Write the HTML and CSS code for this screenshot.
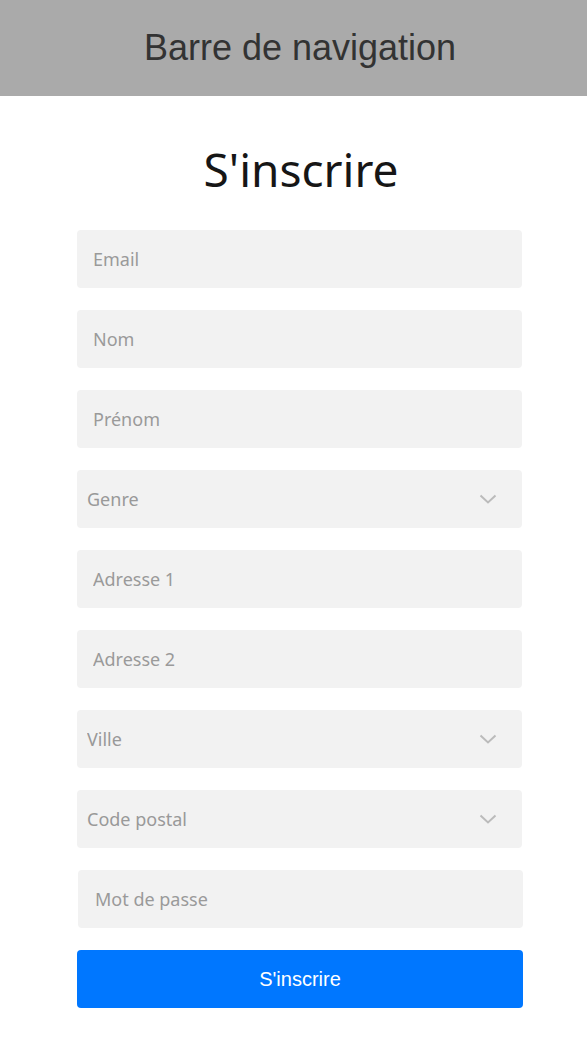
FILE: index.html
```html
<!DOCTYPE html>
<html lang="fr">
<head>
<meta charset="utf-8">
<title>S'inscrire</title>
<link rel="stylesheet" href="styles.css">
</head>
<body>
<header class="navbar">Barre de navigation</header>
<main class="wrap">
  <h1 class="title">S'inscrire</h1>
  <form class="form">
    <input class="field" type="email" placeholder="Email">
    <input class="field" type="text" placeholder="Nom">
    <input class="field" type="text" placeholder="Prénom">
    <div class="select-box">
      <select class="field select"><option>Genre</option></select>
      <svg class="chev" width="18" height="10" viewBox="0 0 18 10"><path d="M1.5 1.5 L9 8.5 L16.5 1.5" fill="none" stroke="#bbb" stroke-width="2"/></svg>
    </div>
    <input class="field" type="text" placeholder="Adresse 1">
    <input class="field" type="text" placeholder="Adresse 2">
    <div class="select-box">
      <select class="field select"><option>Ville</option></select>
      <svg class="chev" width="18" height="10" viewBox="0 0 18 10"><path d="M1.5 1.5 L9 8.5 L16.5 1.5" fill="none" stroke="#bbb" stroke-width="2"/></svg>
    </div>
    <div class="select-box">
      <select class="field select"><option>Code postal</option></select>
      <svg class="chev" width="18" height="10" viewBox="0 0 18 10"><path d="M1.5 1.5 L9 8.5 L16.5 1.5" fill="none" stroke="#bbb" stroke-width="2"/></svg>
    </div>
    <input class="field pass" type="password" placeholder="Mot de passe">
    <button class="submit" type="button">S'inscrire</button>
  </form>
</main>
</body>
</html>
```
FILE: styles.css
```css
html, body { margin: 0; padding: 0; background: #fff; }
body { font-family: "Noto Sans", "Open Sans", sans-serif; }
.navbar {
  height: 96px;
  background: #aaaaaa;
  color: #333;
  font-family: "Liberation Sans", Arial, sans-serif;
  font-size: 36px;
  display: flex;
  align-items: center;
  justify-content: center;
  padding-left: 13px;
  box-sizing: border-box;
}
.wrap {
  width: 445px;
  margin-left: 77px;
}
.title {
  margin: 43px 0 0;
  height: 91px;
  font-size: 46px;
  font-weight: 400;
  color: #161616;
  text-align: center;
  line-height: 60px;
  padding-left: 3px;
}
.form {
  display: flex;
  flex-direction: column;
  gap: 22px;
}
.field {
  display: block;
  width: 445px;
  height: 58px;
  box-sizing: border-box;
  border: none;
  border-radius: 4px;
  background: #f2f2f2;
  padding: 0 16px;
  font-family: "Noto Sans", "Open Sans", sans-serif;
  font-size: 18px;
  color: #999;
  outline: none;
  margin: 0;
}
.field::placeholder { color: #9a9a9a; }
.select-box { position: relative; }
.select {
  appearance: none;
  -webkit-appearance: none;
  padding: 0 10px;
}
.chev {
  position: absolute;
  right: 25px;
  top: 24px;
  pointer-events: none;
}
.pass { margin-left: 1px; padding-left: 17px; }
.submit {
  width: 446px;
  height: 58px;
  border: none;
  border-radius: 4px;
  background: #0077ff;
  color: #fff;
  font-family: "Liberation Sans", Arial, sans-serif;
  font-size: 20px;
  margin: 0;
  padding: 0;
}
```
